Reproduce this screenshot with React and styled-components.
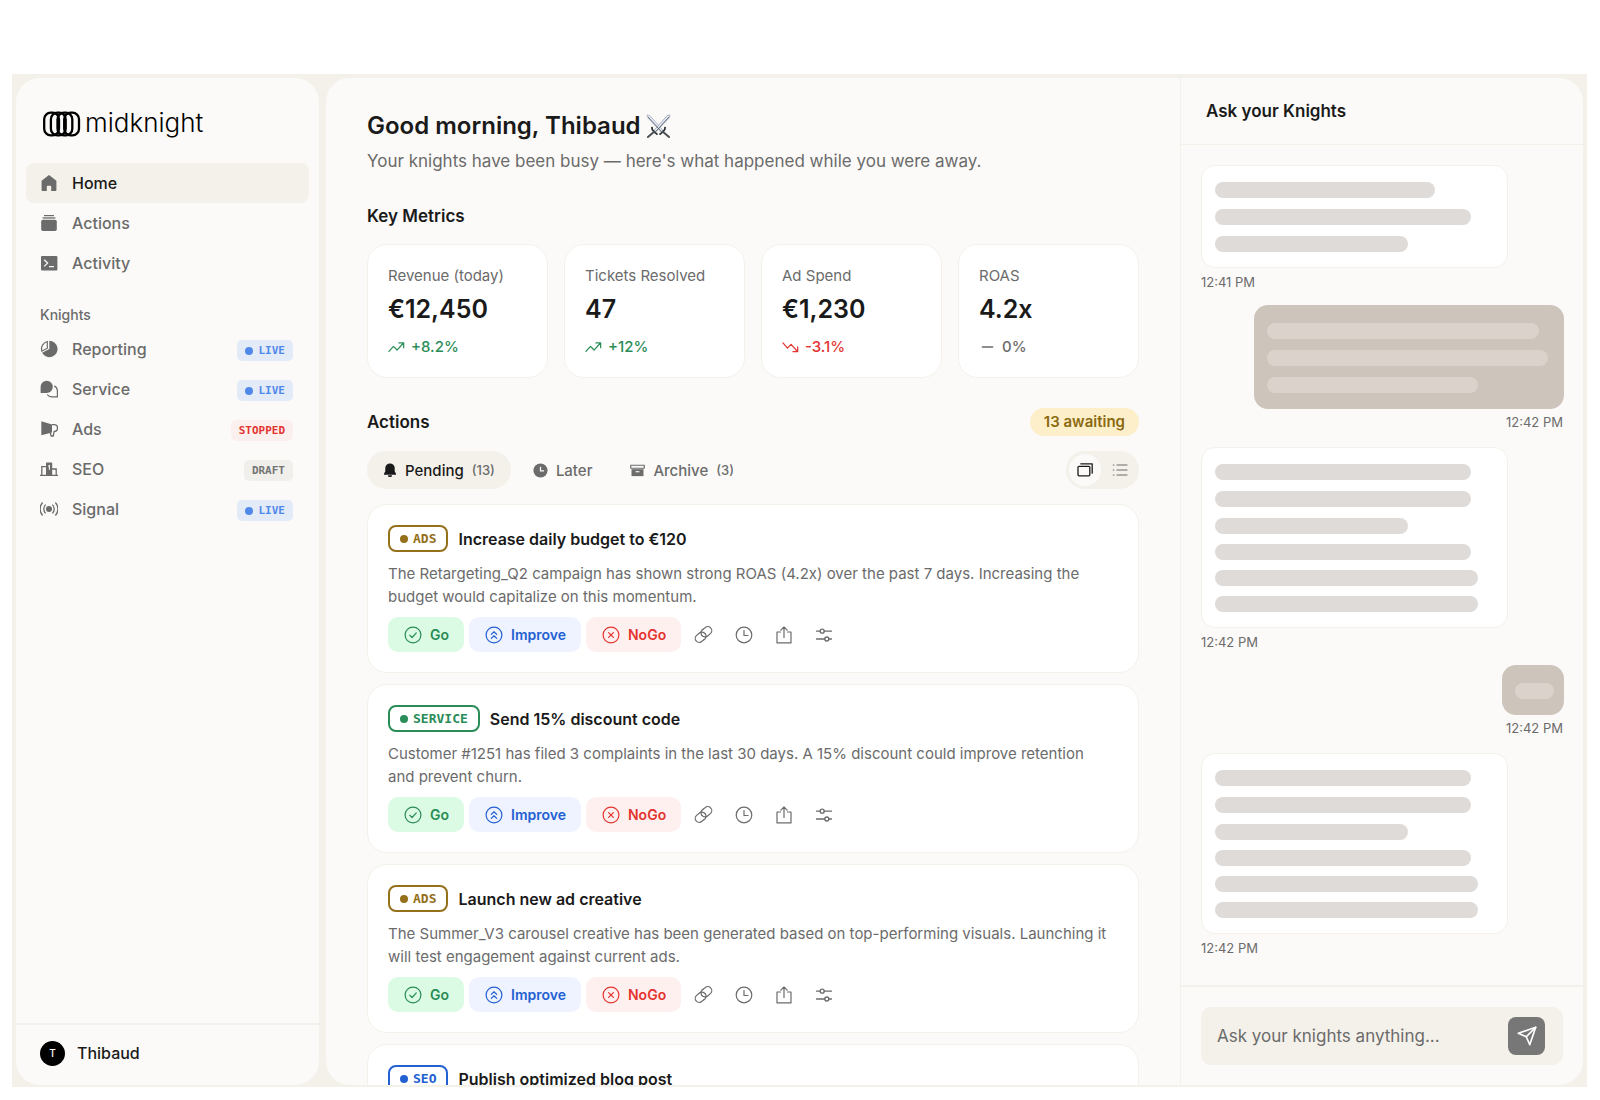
import React, { useState } from "react";
import styled, { createGlobalStyle, css } from "styled-components";

const sans = `Inter, "Liberation Sans", sans-serif`;
const mono = `"DejaVu Sans Mono", "Liberation Mono", monospace`;

const color = {
  frame: "#f4f1ea",
  panel: "#fbfaf8",
  line: "#f4f1ec",
  ink: "#1a1a1a",
  muted: "#6b6b6b",
  green: "#2a8c56",
  blue: "#2360d2",
  red: "#e3342f",
  gold: "#95701a",
  amber: "#8a6a10",
  bubble: "#cdc4bb",
};

const GlobalStyle = createGlobalStyle`
  *, *::before, *::after { box-sizing: border-box; }
  body { margin: 0; background: #fff; color: ${color.ink}; font-family: ${sans}; font-size: 16px; }
  h1, h2, h3, p, ul, dl, dd { margin: 0; padding: 0; }
  ul { list-style: none; }
  button, input { font: inherit; color: inherit; border: 0; padding: 0; background: none; }
  button { cursor: pointer; }
  a { color: inherit; text-decoration: none; }
  svg { display: block; flex: none; }
`;

/* ---------- shell ---------- */

const Page = styled.div`
  display: flex;
  height: 100vh;
  padding: 74px 13px 13px 12px;
`;

const Frame = styled.div`
  display: flex;
  flex: 1;
  gap: 7px;
  min-width: 0;
  padding: 4px 4px 2px;
  background: ${color.frame};
`;

const Sidebar = styled.aside`
  display: flex;
  flex-direction: column;
  flex: none;
  width: 303px;
  background: ${color.panel};
  border-radius: 24px;
`;

const Workspace = styled.div`
  display: flex;
  flex: 1;
  min-width: 0;
  overflow: hidden;
  background: ${color.panel};
  border-radius: 24px;
`;

/* ---------- sidebar ---------- */

const Brand = styled.a`
  display: flex;
  align-items: center;
  gap: 4px;
  height: 85px;
  padding: 6px 0 0 26px;
  color: #000;
`;

const BrandName = styled.span`
  padding-bottom: 2px;
  font-size: 26px;
  font-weight: 300;
  line-height: 32px;
`;

const Nav = styled.nav`
  flex: 1;
  padding: 0 10px;
`;

const NavHeading = styled.h2`
  margin: 22px 0 4px 14px;
  font-size: 14px;
  font-weight: 500;
  line-height: 20px;
  color: ${color.muted};
`;

const NavLink = styled.a`
  display: flex;
  align-items: center;
  gap: 14px;
  height: 40px;
  padding: 0 16px 0 14px;
  border-radius: 8px;
  font-weight: 500;
  color: ${color.muted};
  background: ${(p) => (p.$active ? color.frame : "transparent")};
  span:first-of-type { flex: 1; color: ${(p) => (p.$active ? color.ink : "inherit")}; }
`;

const badgeTones = {
  LIVE: css`color: #5088ea; background: #e3ebf9;`,
  STOPPED: css`color: ${color.red}; background: #fbf0ee;`,
  DRAFT: css`color: #747474; background: #f0efec;`,
};

const Badge = styled.span`
  display: flex;
  align-items: center;
  gap: 6px;
  height: 21px;
  margin-top: 3px;
  padding: 0 8px;
  border-radius: 5px;
  font-family: ${mono};
  font-size: 11px;
  font-weight: 700;
  line-height: 20px;
  ${(p) => badgeTones[p.$tone]}
`;

const Dot = styled.i`
  flex: none;
  width: 8px;
  height: 8px;
  border-radius: 50%;
  background: currentColor;
`;

const Account = styled.button`
  display: flex;
  align-items: center;
  gap: 12px;
  height: 62px;
  padding: 0 24px 4px;
  border-top: 2px solid ${color.line};
  font-weight: 500;
`;

const Avatar = styled.span`
  display: grid;
  place-items: center;
  width: 25px;
  height: 25px;
  border-radius: 50%;
  background: #000;
  color: #fff;
  font-size: 10px;
  font-weight: 500;
`;

/* ---------- feed ---------- */

const Feed = styled.main`
  flex: 1;
  min-width: 0;
  padding: 32px 41px;
  overflow-y: auto;
  scrollbar-width: none;
`;

const Greeting = styled.h1`
  display: flex;
  align-items: center;
  gap: 5px;
  font-size: 24px;
  font-weight: 600;
  line-height: 32px;
`;

const Intro = styled.p`
  margin-top: 7px;
  font-size: 17px;
  line-height: 24px;
  color: ${color.muted};
`;

const SectionTitle = styled.h2`
  font-size: 17px;
  font-weight: 600;
  line-height: 24px;
`;

const Metrics = styled.dl`
  display: grid;
  grid-template-columns: repeat(4, 1fr);
  gap: 16px;
  margin: 16px 0 30px;
`;

const cardSurface = css`
  padding: 20px;
  border: 1px solid ${color.frame};
  border-radius: 20px;
  background: #fff;
`;

const Metric = styled.div`
  ${cardSurface}
`;

const MetricLabel = styled.dt`
  font-size: 15px;
  line-height: 22px;
  color: ${color.muted};
`;

const MetricValue = styled.dd`
  margin-top: 6px;
  font-size: 25px;
  font-weight: 600;
  line-height: 32px;
`;

const trendColor = { up: color.green, down: color.red, flat: color.muted };

const Trend = styled.dd`
  display: flex;
  align-items: center;
  gap: 6px;
  margin-top: 12px;
  font-size: 15px;
  font-weight: 500;
  line-height: 20px;
  color: ${(p) => trendColor[p.$tone]};
`;

const Section = styled.section`
  margin-top: 31px;
  & + & { margin-top: 30px; }
`;

const Row = styled.div`
  display: flex;
  align-items: center;
  justify-content: space-between;
`;

const Count = styled.span`
  padding: 0 14px;
  border-radius: 14px;
  background: #feefcb;
  color: ${color.amber};
  font-size: 15px;
  font-weight: 600;
  line-height: 28px;
`;

const Toolbar = styled(Row)`
  margin: 15px 0;
`;

const Tabs = styled.div`
  display: flex;
  gap: 6px;
`;

const Tab = styled.button`
  display: flex;
  align-items: center;
  gap: 8px;
  height: 38px;
  padding: 0 16px;
  border-radius: 19px;
  font-size: 15px;
  font-weight: 500;
  color: ${(p) => (p.$active ? color.ink : color.muted)};
  background: ${(p) => (p.$active ? color.frame : "transparent")};
  small { font-size: 13px; color: ${color.muted}; }
`;

const ViewSwitch = styled.div`
  display: flex;
  gap: 3px;
  padding: 3px;
  border-radius: 19px;
  background: ${color.frame};
`;

const ViewButton = styled.button`
  display: grid;
  place-items: center;
  width: 32px;
  height: 32px;
  border-radius: 50%;
  color: ${(p) => (p.$active ? color.ink : color.muted)};
  background: ${(p) => (p.$active ? color.panel : "transparent")};
`;

const CardList = styled.ul`
  display: grid;
  gap: 11px;
`;

const Card = styled.li`
  ${cardSurface}
`;

const CardHead = styled.div`
  display: flex;
  align-items: center;
  gap: 10px;
`;

const CardTitle = styled.h3`
  font-size: 16px;
  font-weight: 600;
  line-height: 24px;
`;

const tagColor = { ADS: color.gold, SERVICE: color.green, SEO: color.blue };

const Tag = styled.span`
  display: flex;
  align-items: center;
  gap: 5px;
  height: 27px;
  padding: 0 10px;
  border: 2px solid ${(p) => tagColor[p.$kind]};
  border-radius: 8px;
  color: ${(p) => tagColor[p.$kind]};
  font-family: ${mono};
  font-size: 13px;
  font-weight: 700;
`;

const CardText = styled.p`
  margin: 10px 0 9px;
  padding-right: 8px;
  font-size: 15px;
  line-height: 23px;
  color: ${color.muted};
`;

const Controls = styled.div`
  display: flex;
  align-items: center;
  gap: 5px;
`;

const decisionTones = {
  go: css`color: ${color.green}; background: #dcfbe5;`,
  improve: css`color: ${color.blue}; background: #eef3ff;`,
  nogo: css`color: ${color.red}; background: #fff0f0;`,
};

const Decision = styled.button`
  display: flex;
  align-items: center;
  gap: 8px;
  height: 35px;
  padding: 0 15px 0 16px;
  border-radius: 10px;
  font-size: 14px;
  font-weight: 600;
  ${(p) => decisionTones[p.$tone]}
`;

const IconButton = styled.button`
  display: grid;
  place-items: center;
  width: 35px;
  height: 35px;
  color: ${color.muted};
`;

/* ---------- chat ---------- */

const Chat = styled.section`
  display: flex;
  flex-direction: column;
  flex: none;
  width: 403px;
  border-left: 1px solid ${color.frame};
`;

const ChatHeader = styled.header`
  flex: none;
  padding: 21px 25px 21px;
  border-bottom: 1px solid ${color.frame};
`;

const Thread = styled.ol`
  display: flex;
  flex-direction: column;
  gap: 15px;
  flex: 1;
  min-height: 0;
  margin: 0;
  padding: 20px 19px 0 20px;
  list-style: none;
  overflow: hidden;
`;

const Message = styled.li`
  display: flex;
  flex-direction: column;
  gap: ${(p) => (p.$mine ? 5 : 6)}px;
  align-items: ${(p) => (p.$mine ? "flex-end" : "flex-start")};
  padding-bottom: ${(p) => (p.$mine ? 2 : 0)}px;
  time { margin-right: ${(p) => (p.$mine ? 1 : 0)}px; }
`;

const Bubble = styled.div`
  display: grid;
  gap: 10px;
  border-radius: 14px;
  ${(p) =>
    p.$mine
      ? css`padding: 18px 10px 16px 13px; background: ${color.bubble};`
      : css`width: 307px; padding: 16px 13px 15px; background: #fff; border: 1px solid ${color.line};`}
  ${(p) => p.$mine && p.$wide && css`width: 310px;`}
`;

const Paragraph = styled.div`
  display: grid;
  gap: 11px;
`;

const Tail = styled(Paragraph)`
  gap: 10px;
`;

const Bar = styled.span`
  height: 16px;
  border-radius: 8px;
  background: ${(p) => (p.$mine ? "#dbd2cb" : "#dfdbd8")};
`;

const Time = styled.time`
  font-size: 13px;
  line-height: 16px;
  color: ${color.muted};
`;

const Composer = styled.form`
  flex: none;
  padding: 20px;
  border-top: 2px solid ${color.line};
`;

const Field = styled.div`
  display: flex;
  align-items: center;
  height: 58px;
  padding: 0 18px 0 16px;
  border-radius: 10px;
  background: ${color.frame};
`;

const Input = styled.input`
  flex: 1;
  min-width: 0;
  font-size: 17px;
  line-height: 24px;
  outline: 0;
  &::placeholder { color: ${color.muted}; opacity: 1; }
`;

const Send = styled.button`
  display: grid;
  place-items: center;
  width: 37px;
  height: 38px;
  border-radius: 8px;
  background: #777;
  color: #fff;
`;

/* ---------- icons ---------- */

const Svg = ({ size = 18, box = 18, children, ...rest }) => (
  <svg width={size} height={size} viewBox={`0 0 ${box} ${box}`} fill="none" aria-hidden="true" {...rest}>
    {children}
  </svg>
);
const Stroke = ({ w = 1.2, ...rest }) => (
  <Svg stroke="currentColor" strokeWidth={w} strokeLinecap="round" strokeLinejoin="round" {...rest} />
);

const LogoMark = () => (
  <svg width="39" height="26" viewBox="0 0 39 26" fill="none" stroke="#000" strokeWidth="2.3" aria-hidden="true">
    {[2.2, 8.9, 15.5, 22.2].map((x) => (
      <rect key={x} x={x} y="1.7" width="14.8" height="22.6" rx="6.5" />
    ))}
  </svg>
);

const Swords = () => (
  <svg width="25" height="25" viewBox="0 0 26 26" fill="none" aria-hidden="true">
    <path d="M1 1l3 .6L18.6 18l-1.8 1.6L2 4.2z" fill="#dfe6f1" stroke="#9aa3b2" strokeWidth=".6" />
    <path d="M25 1l-3 .6L7.4 18l1.8 1.6L24 4.2z" fill="#dfe6f1" stroke="#858d9a" strokeWidth=".6" />
    <path d="M2 3l14.500 16M24 3L9.500 19" stroke="#59616d" strokeWidth=".9" />
    <path d="M14 21.500l2.500-2.200 3-3 .4-3M12 21.500l-2.500-2.200-3-3-.4-3" stroke="#2f3338" strokeWidth="1.800" />
    <path d="M17.500 18.500l6.500 5.500M8.500 18.500L2 24" stroke="#4a4f56" strokeWidth="2" strokeLinecap="round" />
  </svg>
);

const icons = {
  home: () => (
    <Svg><path fill="currentColor" d="M9 1 1.600 6.800v9.400c0 .5.300.8.800.8h4.400v-4.600c0-.4.3-.7.700-.7h3c.4 0 .7.300.7.700V17h4.400c.5 0 .8-.3.800-.8V6.800z" /></Svg>
  ),
  actions: () => (
    <Svg><g fill="currentColor"><rect x="4" y="1" width="10" height="1.200" /><rect x="2.600" y="3.300" width="12.800" height="1.300" /><rect x="1.200" y="5.700" width="15.600" height="11.300" rx="1.800" /></g></Svg>
  ),
  activity: () => (
    <Svg><rect x="1" y="2" width="16.400" height="14.400" rx="1" fill="currentColor" /><path d="m4.200 5.800 3.400 3.300-3.400 3.300M9 12.700h5" stroke="#fbfaf8" strokeWidth="1.300" /></Svg>
  ),
  reporting: () => (
    <Svg><path d="M9.300.8a8.200 8.200 0 1 1-7.200 12l7.200-3.900z" fill="currentColor" /><path d="M7.300 1.500v6.700l-5.500 3C.4 6.800 3.200 2.700 7.300 1.500z" stroke="currentColor" strokeWidth="1.200" /></Svg>
  ),
  service: () => (
    <Svg><path d="M14.300 5.900A5.600 5.600 0 0 1 17.400 11v5.800h-5.600a5.500 5.500 0 0 1-4.600-2.300" stroke="currentColor" strokeWidth="1.200" /><path d="M6.700.7a6.100 6.100 0 0 1 0 12.300H.6V6.800A6.100 6.100 0 0 1 6.700.7z" fill="currentColor" /></Svg>
  ),
  ads: () => (
    <Svg><path d="M1.300 1.200 12 4.600v8L1.300 15.300z" fill="currentColor" /><path d="M12 4.700h2.200a3.300 3.300 0 0 1 0 6.600l-1 4.700h-2l-1-3.400" stroke="currentColor" strokeWidth="1.300" /></Svg>
  ),
  seo: () => (
    <Svg><path d="M0 15.400h18M1.800 15V6.600h4.300M12 9h4.200v6" stroke="currentColor" strokeWidth="1.300" /><path d="M6 3.200c0-.4.3-.7.700-.7h4.800c.4 0 .7.300.7.700V15.500H6z" fill="currentColor" /><path d="M8.200 6.300 9.400 5.700v4" stroke="#fbfaf8" strokeWidth="1.100" /></Svg>
  ),
  signal: () => (
    <Svg><circle cx="9" cy="9" r="3" fill="currentColor" /><path d="M5.600 4.600a6.200 6.200 0 0 0 0 8.800M12.400 4.600a6.200 6.200 0 0 1 0 8.800M2.600 2.500a9.700 9.700 0 0 0 0 13M15.400 2.500a9.700 9.700 0 0 1 0 13" stroke="currentColor" strokeWidth="1.300" /></Svg>
  ),
  bell: () => (
    <Svg size={14} box={14}><path d="M7 .4a4.700 4.700 0 0 1 4.700 4.700v3.200l1.300 2.400v1H1v-1l1.300-2.400V5.100A4.700 4.700 0 0 1 7 .4zM5 12.300h4a2 2 0 0 1-4 0z" fill="currentColor" /></Svg>
  ),
  later: () => (
    <Svg size={15} box={14}><circle cx="7" cy="7" r="6.600" fill="currentColor" /><path d="M7 3.500V7.300h3.300" stroke="#fbfaf8" strokeWidth="1.200" /></Svg>
  ),
  archive: () => (
    <Svg size={15} box={16}><path d="M.8 2.400h14.400v3.200H.8z" stroke="currentColor" strokeWidth="1.200" /><path d="M1.600 6.600h12.800V14H1.600z" fill="currentColor" /><path d="M6 9.300h4" stroke="#fbfaf8" strokeWidth="1.200" /></Svg>
  ),
  up: () => <Stroke w={1.300} size={17}><path d="m1 13.200 4.800-5.400 3.800 3.900 6.800-7.500M11.600 4.200h5v5" /></Stroke>,
  down: () => <Stroke w={1.300} size={17}><path d="m1 4.200 4.800 5.400 3.800-3.900 6.800 7.500M11.600 13.400h5v-5" /></Stroke>,
  flat: () => <Stroke w={1.400} size={17}><path d="M3.500 8.500h11" /></Stroke>,
  cards: () => (
    <Stroke size={16} box={16} w={1.300}><rect x="1" y="4.300" width="11.800" height="9.500" rx="1" /><path d="M3.800 1.800h11.400v9.400" /></Stroke>
  ),
  list: () => (
    <Stroke size={16} box={16} w={1.200}><path d="M5 3h10M5 8h10M5 13h10M1.300 3h.6M1.300 8h.6M1.300 13h.6" /></Stroke>
  ),
  go: () => <Stroke><circle cx="9" cy="9" r="7.900" /><path d="m5.800 9.300 2.300 2.200 4.200-4.600" /></Stroke>,
  improve: () => <Stroke><circle cx="9" cy="9" r="7.900" /><path d="M6.300 8.400 9 5.800l2.700 2.600M6.300 12.400 9 9.800l2.700 2.600" /></Stroke>,
  nogo: () => <Stroke><circle cx="9" cy="9" r="7.900" /><path d="m6.600 6.600 4.800 4.800M11.400 6.600l-4.800 4.800" /></Stroke>,
  link: () => (
    <Stroke box={24} size={19} w={1.500}>
      <path d="M10 13a5 5 0 0 0 7.540.540l3.500-3a5 5 0 0 0-7.070-7.070l-2.220 1.710" />
      <path d="M14 11a5 5 0 0 0-7.540-.540l-3.500 3a5 5 0 0 0 7.070 7.070l2.210-1.710" />
      <path d="M11.750 5.180A5 5 0 0 0 10 13M12.240 18.820A5 5 0 0 0 14 11" />
    </Stroke>
  ),
  clock: () => <Stroke><circle cx="9" cy="9" r="7.800" /><path d="M9 4.500v5h4" /></Stroke>,
  share: () => <Stroke><path d="M5.500 6H2v10.900h14V6h-3.500M9 11.500V1.200M5.900 4.100 9 1l3.100 3.100" /></Stroke>,
  sliders: () => (
    <Stroke w={1.300}><path d="M1.500 5.200h3.700M9.200 5.200h7.300M1.500 13h8.300M13.800 13h2.700" /><circle cx="7.200" cy="5.200" r="2" /><circle cx="11.800" cy="13" r="2" /></Stroke>
  ),
  send: () => (
    <Stroke size={22} box={24} w={1.800}><path d="M21.500 2.500 15 21.500l-3.800-8.700L2.500 9z" /><path d="m21.500 2.500-10.300 10.300" /></Stroke>
  ),
};

const Icon = ({ name }) => React.createElement(icons[name]);

/* ---------- data ---------- */

const pages = [["home", "Home"], ["actions", "Actions"], ["activity", "Activity"]];

const knights = [
  ["reporting", "Reporting", "LIVE"],
  ["service", "Service", "LIVE"],
  ["ads", "Ads", "STOPPED"],
  ["seo", "SEO", "DRAFT"],
  ["signal", "Signal", "LIVE"],
];

const metrics = [
  ["Revenue (today)", "€12,450", "up", "+8.2%"],
  ["Tickets Resolved", "47", "up", "+12%"],
  ["Ad Spend", "€1,230", "down", "-3.1%"],
  ["ROAS", "4.2x", "flat", "0%"],
];

const tabs = [["bell", "Pending", "(13)"], ["later", "Later"], ["archive", "Archive", "(3)"]];

const cards = [
  ["ADS", "Increase daily budget to €120", "The Retargeting_Q2 campaign has shown strong ROAS (4.2x) over the past 7 days. Increasing the budget would capitalize on this momentum."],
  ["SERVICE", "Send 15% discount code", "Customer #1251 has filed 3 complaints in the last 30 days. A 15% discount could improve retention and prevent churn."],
  ["ADS", "Launch new ad creative", "The Summer_V3 carousel creative has been generated based on top-performing visuals. Launching it will test engagement against current ads."],
  ["SEO", "Publish optimized blog post"],
];

const decisions = [["go", "Go"], ["improve", "Improve"], ["nogo", "NoGo"]];
const tools = [["link", "Copy link"], ["clock", "Do it later"], ["share", "Share"], ["sliders", "Adjust"]];

const messages = [
  { time: "12:41 PM", lines: [220, 256, 193] },
  { time: "12:42 PM", mine: true, lines: [272, 281, 211] },
  { time: "12:42 PM", lines: [256, 256, 193], tail: [256, 263, 263] },
  { time: "12:42 PM", mine: true, lines: [39] },
  { time: "12:42 PM", lines: [256, 256, 193], tail: [256, 263, 263] },
];

/* ---------- view ---------- */

function Bars({ as: Group, widths, mine }) {
  return (
    <Group>
      {widths.map((width, i) => <Bar key={i} $mine={mine} style={{ width }} />)}
    </Group>
  );
}

function ActionCard({ kind, title, text }) {
  return (
    <Card>
      <CardHead>
        <Tag $kind={kind}><Dot />{kind}</Tag>
        <CardTitle>{title}</CardTitle>
      </CardHead>
      {text && (
        <>
          <CardText>{text}</CardText>
          <Controls>
            {decisions.map(([tone, label]) => (
              <Decision key={tone} type="button" $tone={tone}><Icon name={tone} />{label}</Decision>
            ))}
            {tools.map(([icon, label]) => (
              <IconButton key={icon} type="button" aria-label={label}><Icon name={icon} /></IconButton>
            ))}
          </Controls>
        </>
      )}
    </Card>
  );
}

export default function App() {
  const [tab, setTab] = useState("Pending");
  const [view, setView] = useState("cards");
  const [draft, setDraft] = useState("");

  return (
    <>
      <GlobalStyle />
      <Page>
        <Frame>
          <Sidebar>
            <Brand href="#">
              <LogoMark />
              <BrandName>midknight</BrandName>
            </Brand>
            <Nav>
              {pages.map(([icon, label]) => (
                <NavLink key={label} href="#" $active={label === "Home"}>
                  <Icon name={icon} />
                  <span>{label}</span>
                </NavLink>
              ))}
              <NavHeading>Knights</NavHeading>
              {knights.map(([icon, label, status]) => (
                <NavLink key={label} href="#">
                  <Icon name={icon} />
                  <span>{label}</span>
                  <Badge $tone={status}>
                    {status === "LIVE" && <Dot />}
                    {status}
                  </Badge>
                </NavLink>
              ))}
            </Nav>
            <Account type="button">
              <Avatar>T</Avatar>
              Thibaud
            </Account>
          </Sidebar>

          <Workspace>
            <Feed>
              <Greeting>Good morning, Thibaud <Swords /></Greeting>
              <Intro>Your knights have been busy — here's what happened while you were away.</Intro>

              <Section>
                <SectionTitle>Key Metrics</SectionTitle>
                <Metrics>
                  {metrics.map(([label, value, tone, change]) => (
                    <Metric key={label}>
                      <MetricLabel>{label}</MetricLabel>
                      <MetricValue>{value}</MetricValue>
                      <Trend $tone={tone}><Icon name={tone} />{change}</Trend>
                    </Metric>
                  ))}
                </Metrics>
              </Section>

              <Section>
                <Row>
                  <SectionTitle>Actions</SectionTitle>
                  <Count>13 awaiting</Count>
                </Row>
                <Toolbar>
                  <Tabs>
                    {tabs.map(([icon, label, count]) => (
                      <Tab key={label} type="button" $active={tab === label} onClick={() => setTab(label)}>
                        <Icon name={icon} />
                        {label}
                        {count && <small>{count}</small>}
                      </Tab>
                    ))}
                  </Tabs>
                  <ViewSwitch>
                    {["cards", "list"].map((name) => (
                      <ViewButton key={name} type="button" aria-label={name} aria-pressed={view === name} $active={view === name} onClick={() => setView(name)}>
                        <Icon name={name} />
                      </ViewButton>
                    ))}
                  </ViewSwitch>
                </Toolbar>
                <CardList>
                  {cards.map(([kind, title, text]) => (
                    <ActionCard key={title} kind={kind} title={title} text={text} />
                  ))}
                </CardList>
              </Section>
            </Feed>

            <Chat>
              <ChatHeader><SectionTitle>Ask your Knights</SectionTitle></ChatHeader>
              <Thread>
                {messages.map(({ time, mine, lines, tail }, i) => (
                  <Message key={i} $mine={mine}>
                    <Bubble $mine={mine} $wide={lines.length > 1}>
                      <Bars as={Paragraph} widths={lines} mine={mine} />
                      {tail && <Bars as={Tail} widths={tail} />}
                    </Bubble>
                    <Time>{time}</Time>
                  </Message>
                ))}
              </Thread>
              <Composer onSubmit={(e) => e.preventDefault()}>
                <Field>
                  <Input
                    aria-label="Ask your knights anything"
                    placeholder="Ask your knights anything..."
                    value={draft}
                    onChange={(e) => setDraft(e.target.value)}
                  />
                  <Send type="submit" aria-label="Send"><Icon name="send" /></Send>
                </Field>
              </Composer>
            </Chat>
          </Workspace>
        </Frame>
      </Page>
    </>
  );
}
